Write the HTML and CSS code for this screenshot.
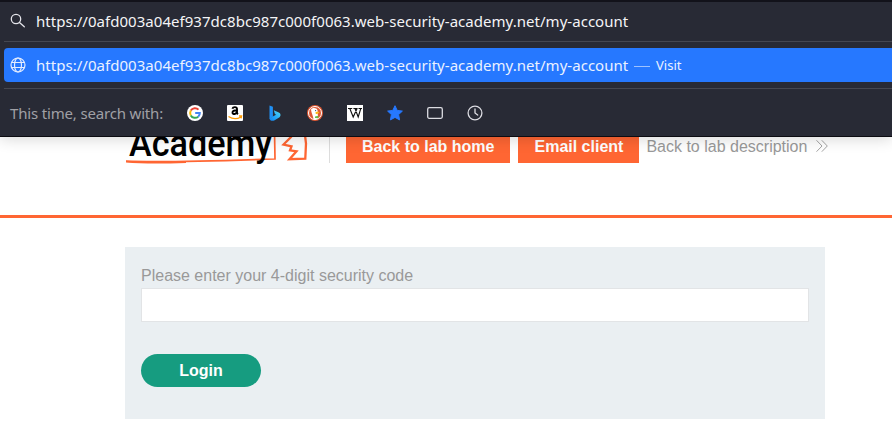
FILE: index.html
```html
<!DOCTYPE html>
<html lang="en">
<head>
<meta charset="utf-8">
<title>Login</title>
<link rel="stylesheet" href="styles.css">
</head>
<body>
<div class="urlbar">
  <div class="row input-row">
    <svg class="icon" viewBox="0 0 16 16" fill="none" stroke="#e4e4ea" stroke-width="1.3" stroke-linecap="round"><circle cx="6" cy="6" r="4.7"/><path d="M9.5 9.5l4.8 4.3"/></svg>
    <span class="url">https://0afd003a04ef937dc8bc987c000f0063.web-security-academy.net/my-account</span>
  </div>
  <div class="row result">
    <svg class="icon" viewBox="0 0 16 16" fill="none" stroke="#e3ecff" stroke-width="1.2"><circle cx="8" cy="8" r="7"/><ellipse cx="8" cy="8" rx="3.5" ry="7"/><path d="M1.5 5.5h13M1.5 10.5h13"/></svg>
    <span class="url">https://0afd003a04ef937dc8bc987c000f0063.web-security-academy.net/my-account</span>
    <span class="dash"></span>
    <span class="visit">Visit</span>
  </div>
  <div class="engines">
    <span class="engines-label">This time, search with:</span>
    <svg class="engine" viewBox="0 0 16 16"><circle cx="8" cy="8" r="8" fill="#fff"/><g fill="none" stroke-width="2"><path d="M11.5 4.6A4.9 4.9 0 0 0 3.8 5.6" stroke="#ea4335"/><path d="M3.8 5.6a4.9 4.9 0 0 0 0 4.8" stroke="#fbbc05"/><path d="M3.8 10.4a4.9 4.9 0 0 0 7.4 1.3" stroke="#34a853"/><path d="M11.2 11.7A4.9 4.9 0 0 0 12.8 8H8.2" stroke="#4285f4"/></g></svg>
    <svg class="engine" viewBox="0 0 16 16"><rect width="16" height="16" rx="1" fill="#fff"/><path d="M5.4 3.8C6 1.500 10 1.500 10 4v3.600q0 .8.900 1.600M9.900 5.200C6.800 5.200 5.300 6 5.500 7.800c.3 2 4.100 1.600 4.400-1.400" fill="none" stroke="#000" stroke-width="1.900"/><path d="M1.500 11.500Q7.500 15.500 13.700 12.200M12 11l2.600-.1-.5 2.500" fill="none" stroke="#f90" stroke-width="1.300"/></svg>
    <svg class="engine" viewBox="0 0 16 16"><defs><linearGradient id="b" x1="0" y1="1" x2="1" y2="0"><stop offset="0" stop-color="#1780e8"/><stop offset=".4" stop-color="#20a4fa"/><stop offset="1" stop-color="#55dcee"/></linearGradient></defs><path d="M2.500.500l3.400 1.300v9.900l-3.400 2z" fill="#2090f5"/><path d="M6.800 5.300l5 2.200c2.200 1 2.200 3.700.4 4.900l-5 3c-2 1.200-4.700 0-4.700-2.200l6.600-3.400-1.200-.7z" fill="url(#b)"/></svg>
    <svg class="engine" viewBox="0 0 16 16"><circle cx="8" cy="8" r="8" fill="#de5833"/><circle cx="8" cy="8" r="6.500" fill="#de5833" stroke="#fff" stroke-width="1"/><path d="M4 4.800C4.500 2.600 9.900 2.200 10.600 5.500l.2 4 .4 4.200-4.500.7C6 11.200 4.500 8 4 4.800z" fill="#fff"/><path d="M8.500 7.300c2-.8 4.500-.5 3.800.3-1 .9-1.500 1.600-3.500 1.400z" fill="#fdb813"/><path d="M8 11.500l3.300-.7v2.500l-3.200-.4z" fill="#65bc46"/><circle cx="8.600" cy="5.600" r=".6" fill="#24476b"/></svg>
    <svg class="engine" viewBox="0 0 16 16"><rect width="16" height="16" fill="#fff"/><path d="M1 3.500h4.200M6.400 3.500h4.200M11.500 3.500H15M2.800 3.500l3.400 8.500 3.900-8.500M8 3.500l3.200 8.500 2.600-8.500" fill="none" stroke="#111" stroke-width="1.100"/></svg>
    <svg class="engine" viewBox="0 0 16 16"><path d="M8 .7l2.200 4.700 5.200.7-3.800 3.500 1 5.300L8 12.400l-4.600 2.500 1-5.300L.6 6.100l5.200-.7z" fill="#2678ff" stroke="#2678ff" stroke-linejoin="round"/></svg>
    <svg class="engine" viewBox="0 0 16 16"><rect x=".7" y="2.700" width="14.600" height="10.600" rx="1.500" fill="none" stroke="#dcdce2" stroke-width="1.300"/></svg>
    <svg class="engine" viewBox="0 0 16 16" fill="none" stroke="#dcdce2" stroke-width="1.300" stroke-linecap="round"><circle cx="8" cy="8" r="6.900"/><path d="M8 4v4l2.700 2"/></svg>
  </div>
</div>
<header class="header">
  <div class="header-inner">
    <svg class="logo" viewBox="0 0 184 40" width="184" height="40"><g fill="none" stroke="#ff6633" stroke-width="1.700"><path d="M1 34.200q40 1.500 149-2.200L149.500 4"/><path d="M1 34.600q22 2 60 .5"/><path d="M168 7L166 10l-7.500 7.500 8 1.800-1.500 4 6.500 1-7 7.900 15.800-.6.700-15L180 8" stroke-width="2.300"/></g><text class="logo-text" x="4" y="29" textLength="143" lengthAdjust="spacingAndGlyphs">Academy</text></svg>
    <div class="divider"></div>
    <a class="button">Back to lab home</a>
    <a class="button">Email client</a>
    <a class="link">Back to lab description</a>
    <svg class="chevrons" viewBox="0 0 12 12" width="12" height="12" fill="none" stroke="#999" stroke-width=".9"><path d="M.5.300L6 6 .5 11.700M5.800.300L11.300 6l-5.500 5.700"/></svg>
  </div>
</header>
<main class="form">
  <label class="label" for="code">Please enter your 4-digit security code</label>
  <input class="code" id="code" type="text">
  <button class="login">Login</button>
</main>
</body>
</html>
```
FILE: styles.css
```css
* { box-sizing: border-box; }
body {
  margin: 0;
  height: 438px;
  overflow: hidden;
  background: #fff;
  font: 16px/18px "Liberation Sans", sans-serif;
  color: #999;
}
.urlbar {
  position: absolute;
  top: 0;
  left: 0;
  z-index: 2;
  width: 100%;
  height: 137px;
  border-top: 2px solid #12121a;
  border-bottom: 1px solid #0c0c12;
  background: #282a35;
  box-shadow: 0 2px 14px rgba(0, 0, 0, .16);
  font: 15px/20px "Noto Sans", sans-serif;
  color: #f4f4f6;
}
.row { display: flex; align-items: center; margin-left: 4px; }
.input-row { height: 40px; padding-bottom: 1px; border-bottom: 1px solid #454751; }
.result {
  height: 34px;
  margin-top: 6px;
  background: #2678ff;
  border-radius: 4px 0 0 4px;
  color: #eaf1ff;
}
.icon { width: 16px; height: 16px; margin: 0 10px 0 6px; flex: none; }
.url { width: 592px; white-space: nowrap; letter-spacing: .035px; }
.dash { width: 16px; height: 1px; margin: 3px 6px 0; background: #9dc2ff; }
.visit { font-size: 13px; }
.engines {
  display: flex;
  align-items: center;
  gap: 24px;
  height: 48px;
  margin: 6px 0 0 4px;
  padding-left: 6px;
  border-top: 1px solid #454751;
}
.engines-label { color: #a0a0a5; width: 153px; white-space: nowrap; letter-spacing: -.17px; }
.engine { width: 16px; height: 16px; flex: none; }
.header { height: 218px; border-bottom: 3px solid #ff6633; }
.header-inner {
  display: flex;
  align-items: center;
  height: 34px;
  margin-left: 125px;
  transform: translateY(129px);
}
.logo { flex: none; margin-top: 2px; }
.logo-text { font: 500 37px Roboto, sans-serif; fill: #000; }
.divider { width: 1px; height: 34px; margin: 0 16px 0 20px; background: #ddd; flex: none; }
.button {
  height: 34px;
  padding: 0 16px;
  margin-right: 8px;
  background: #ff6633;
  color: #fff;
  font-weight: bold;
  line-height: 36px;
  white-space: nowrap;
}
.link { margin: 2px 0 0 -1px; white-space: nowrap; }
.chevrons { margin-left: 9px; flex: none; }
.form {
  width: 700px;
  height: 172px;
  margin: 29px 0 0 125px;
  padding: 20px 16px;
  background: #eaeff2;
}
.label { display: block; height: 21px; }
.code {
  display: block;
  width: 668px;
  height: 34px;
  border: 1px solid #e2e4e6;
  background: #fff;
}
.login {
  display: block;
  width: 120px;
  height: 33px;
  margin-top: 32px;
  padding: 0;
  border: 0;
  border-radius: 17px;
  background: #169c80;
  color: #fff;
  font: bold 16px "Liberation Sans", sans-serif;
}
```
